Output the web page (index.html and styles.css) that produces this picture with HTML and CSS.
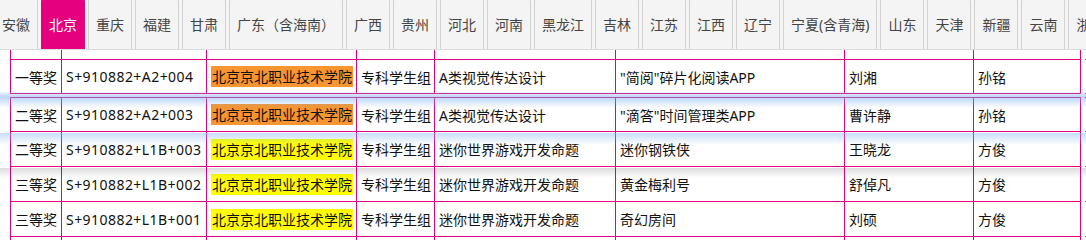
FILE: index.html
```html
<!DOCTYPE html>
<html lang="zh-CN">
<head>
<meta charset="utf-8">
<title>获奖名单</title>
<link rel="stylesheet" href="styles.css">
</head>
<body>
<div class="tabs">
  <div class="tab">安徽</div>
  <div class="tab active">北京</div>
  <div class="tab">重庆</div>
  <div class="tab">福建</div>
  <div class="tab">甘肃</div>
  <div class="tab">广东（含海南）</div>
  <div class="tab">广西</div>
  <div class="tab">贵州</div>
  <div class="tab">河北</div>
  <div class="tab">河南</div>
  <div class="tab">黑龙江</div>
  <div class="tab">吉林</div>
  <div class="tab">江苏</div>
  <div class="tab">江西</div>
  <div class="tab">辽宁</div>
  <div class="tab">宁夏(含青海)</div>
  <div class="tab">山东</div>
  <div class="tab">天津</div>
  <div class="tab">新疆</div>
  <div class="tab">云南</div>
  <div class="tab">浙江</div>
</div>
<div class="tbl">
  <div class="row partial">
    <div class="c"></div><div class="c"></div><div class="c"></div><div class="c"></div><div class="c"></div><div class="c"></div><div class="c"></div><div class="c last"></div><div></div><div class="c tail"></div>
  </div>
  <div class="row r1">
    <div class="c">一等奖</div><div class="c code">S+910882+A2+004</div><div class="c"><span class="hl orange">北京京北职业技术学院</span></div><div class="c">专科学生组</div><div class="c">A类视觉传达设计</div><div class="c">"简阅"碎片化阅读APP</div><div class="c">刘湘</div><div class="c last">孙铭</div><div></div><div class="c tail"></div>
  </div>
</div>
<div class="tbl second">
  <div class="row r2 shadow-blue-edge">
    <div class="c">二等奖</div><div class="c code">S+910882+A2+003</div><div class="c"><span class="hl orange">北京京北职业技术学院</span></div><div class="c">专科学生组</div><div class="c">A类视觉传达设计</div><div class="c">"滴答"时间管理类APP</div><div class="c">曹许静</div><div class="c last">孙铭</div><div></div><div class="c tail"></div>
  </div>
  <div class="row shadow-blue">
    <div class="c">二等奖</div><div class="c code">S+910882+L1B+003</div><div class="c"><span class="hl yellow">北京京北职业技术学院</span></div><div class="c">专科学生组</div><div class="c">迷你世界游戏开发命题</div><div class="c">迷你钢铁侠</div><div class="c">王晓龙</div><div class="c last">方俊</div><div></div><div class="c tail"></div>
  </div>
  <div class="row shadow-gray">
    <div class="c">三等奖</div><div class="c code">S+910882+L1B+002</div><div class="c"><span class="hl yellow">北京京北职业技术学院</span></div><div class="c">专科学生组</div><div class="c">迷你世界游戏开发命题</div><div class="c">黄金梅利号</div><div class="c">舒倬凡</div><div class="c last">方俊</div><div></div><div class="c tail"></div>
  </div>
  <div class="row">
    <div class="c">三等奖</div><div class="c code">S+910882+L1B+001</div><div class="c"><span class="hl yellow">北京京北职业技术学院</span></div><div class="c">专科学生组</div><div class="c">迷你世界游戏开发命题</div><div class="c">奇幻房间</div><div class="c">刘硕</div><div class="c last">方俊</div><div></div><div class="c tail"></div>
  </div>
  <div class="row">
    <div class="c"></div><div class="c"></div><div class="c"></div><div class="c"></div><div class="c"></div><div class="c"></div><div class="c"></div><div class="c last"></div><div></div><div class="c tail"></div>
  </div>
</div>
</body>
</html>
```

FILE: styles.css
```css
* { box-sizing: border-box; }
html, body { margin: 0; padding: 0; }
body {
  width: 1086px;
  height: 240px;
  overflow: hidden;
  background: #fff;
  font-family: "Noto Sans", "Noto Sans CJK SC", sans-serif;
  font-size: 14px;
  color: #111;
}

.tabs {
  display: flex;
  height: 50px;
  margin-left: -6px;
  background: #f4f4f4;
  border-bottom: 1px solid #dcdcdc;
  overflow: hidden;
}
.tab {
  flex: none;
  display: flex;
  align-items: center;
  height: 51px;
  margin-top: -2px;
  margin-right: 3px;
  padding: 0 7px;
  border: 1px solid #d2d2d2;
  border-bottom: 0;
  border-radius: 4px 4px 0 0;
  background: #f4f4f4;
  color: #444;
  white-space: nowrap;
}
.tab.active {
  background: #e4007f;
  border-color: #e4007f;
  color: #fff;
}

.tbl { margin-left: 10px; width: 1140px; }
.tbl.second { margin-top: 3px; }

.row {
  position: relative;
  display: grid;
  grid-template-columns: 51px 145px 150px 78px 181px 229px 129px 108px 4px 60px;
  height: 35px;
}
.row.partial { height: 10px; }
.row.r1 { height: 34px; }
.row.r2 { height: 35px; }
.row.r2 .c { border-top: 1px solid #e4007f; }

.c {
  display: flex;
  align-items: center;
  padding: 0 4px;
  border-left: 1px solid #e4007f;
  border-bottom: 1px solid #e4007f;
  white-space: nowrap;
  overflow: hidden;
}
.c.code { letter-spacing: 0.45px; }
.c.last { border-right: 1px solid #e4007f; }
.c.tail { border-left: 0; }

.hl {
  display: inline-block;
  line-height: 21px;
  padding: 0 1px;
}
.hl.orange { background: #f7952f; }
.hl.yellow { background: #ffff00; }

.shadow-blue-edge::after,
.shadow-blue::after,
.shadow-gray::after {
  content: "";
  position: absolute;
  left: -10px;
  width: 1086px;
  pointer-events: none;
}
.shadow-blue-edge::after {
  top: -5px;
  height: 16px;
  background: linear-gradient(to bottom, rgba(150, 190, 240, 0.15) 0, rgba(120, 170, 235, 0.5) 5px, rgba(150, 190, 240, 0) 16px);
}
.shadow-blue::after {
  top: 1px;
  height: 12px;
  background: linear-gradient(to bottom, rgba(130, 180, 240, 0.45) 0, rgba(150, 190, 240, 0) 12px);
}
.shadow-gray::after {
  top: 1px;
  height: 10px;
  background: linear-gradient(to bottom, rgba(0, 0, 0, 0.14) 0, rgba(0, 0, 0, 0) 10px);
}
```
